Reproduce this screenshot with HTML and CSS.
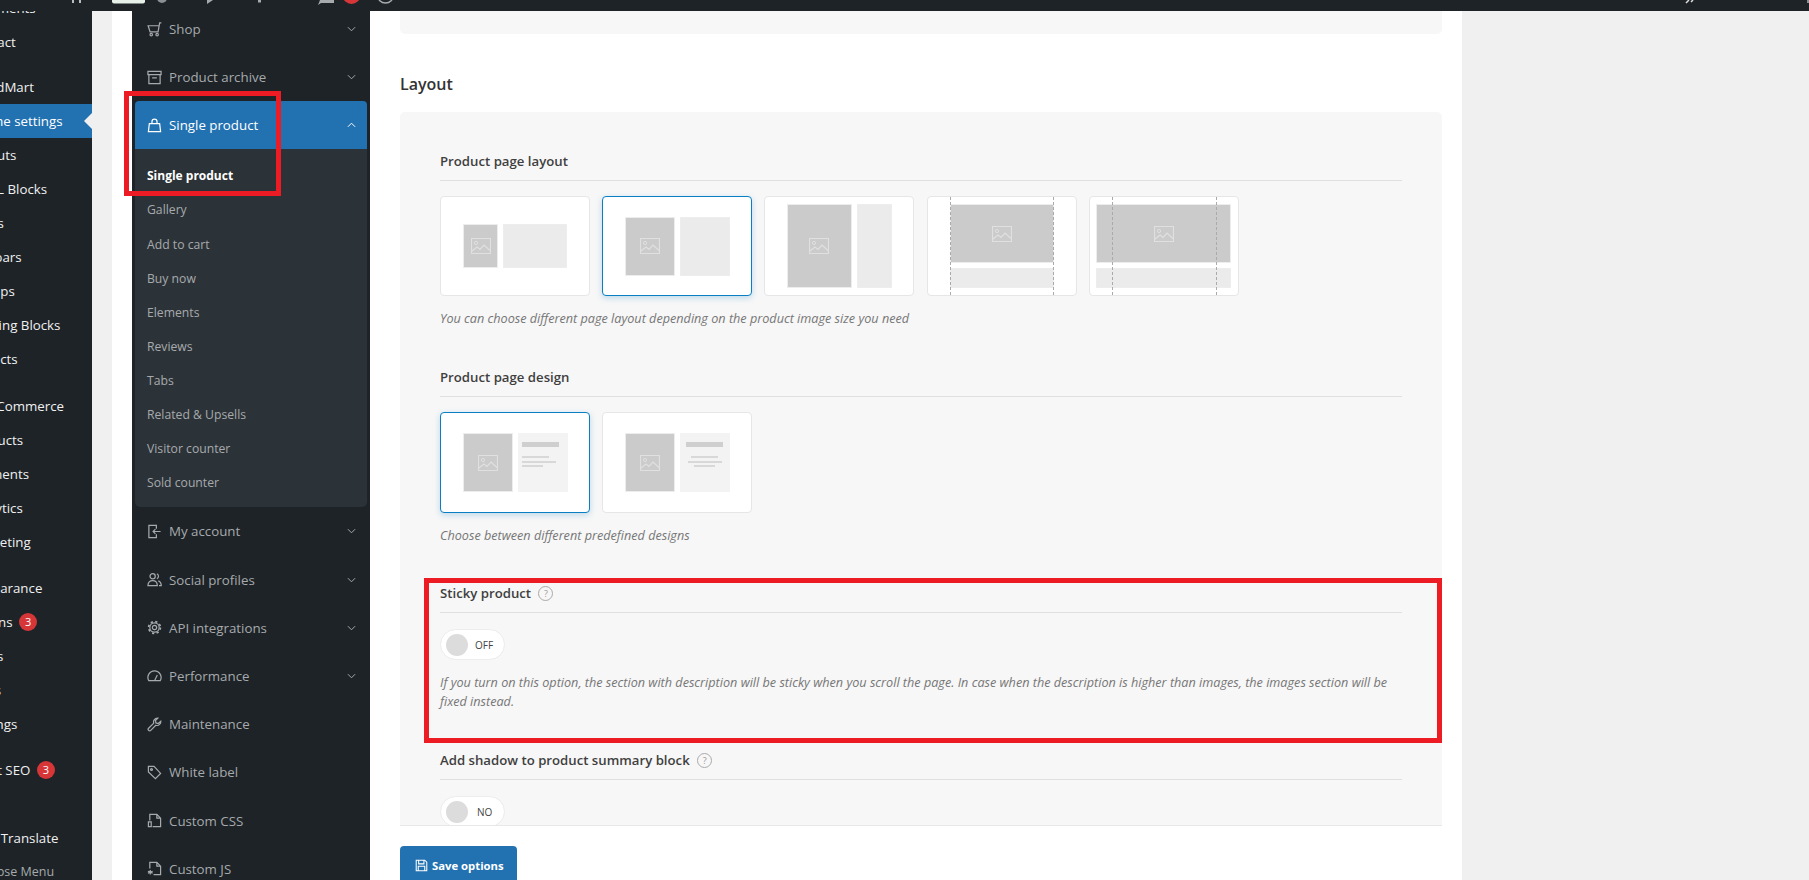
FILE: index.html
```html
<!DOCTYPE html>
<html lang="en">
<head>
    <meta charset="UTF-8">
    <title>Theme settings - Single product</title>
    <link rel="stylesheet" href="styles.css">
</head>
<body>
    <svg class="icon-defs" width="0" height="0">
        <symbol id="pic" viewBox="0 0 20 16">
            <path d="M.5.5h19v15H.5zM1 13l5-4 3 2.500 4-4.500 6 5.500" fill="none" stroke="currentColor" stroke-width="1.200"/>
            <circle cx="5" cy="5" r="1.600" fill="none" stroke="currentColor"/>
        </symbol>
    </svg>

    <!-- only the bottom edge of the admin bar is in view -->
    <div class="admin-bar">
        <svg width="1809" height="11">
            <path d="M73 0v3M80 0v3" stroke="#f0f0f1" stroke-width="1.500"/>
            <rect x="112" y="-6" width="33" height="9.500" rx="2" fill="#e6f0e8"/>
            <circle cx="162" cy="-2" r="5" fill="#8c8f94"/>
            <path d="M207 4l6-4h-6z" fill="#a7aaad"/>
            <rect x="258" y="0" width="3" height="2.500" fill="#a7aaad"/>
            <path d="M318 5l3-2h13V0h-14z" fill="#a7aaad"/>
            <circle cx="351.500" cy="-5" r="9" fill="#d63638"/>
            <circle cx="385.500" cy="-5" r="8" fill="none" stroke="#a7aaad" stroke-width="1.500"/>
            <path d="M1686 3l3-3M1691 2l2-2" stroke="#dcdcde" stroke-width="1.500"/>
            <rect x="1807" y="0" width="2" height="3" fill="#8c8f94"/>
        </svg>
    </div>

    <div class="wrap">
        <div class="wp-menu">
            <ul class="wp-menu-list">
                <li>Comments</li>
                <li>Contact</li>
                <li class="sep sep-s">WoodMart</li>
                <li class="current">Theme settings</li>
                <li>Layouts</li>
                <li>HTML Blocks</li>
                <li>Slides</li>
                <li>Sidebars</li>
                <li>Popups</li>
                <li>Landing Blocks</li>
                <li>Projects</li>
                <li class="sep sep-l">WooCommerce</li>
                <li>Products</li>
                <li>Payments</li>
                <li>Analytics</li>
                <li>Marketing</li>
                <li class="sep">Appearance</li>
                <li>Plugins <span class="count">3</span></li>
                <li>Users</li>
                <li>Tools</li>
                <li>Settings</li>
                <li class="sep">Yoast SEO <span class="count">3</span></li>
                <li>WP</li>
                <li>Loco Translate</li>
                <li class="collapse">Collapse Menu</li>
            </ul>
        </div>

        <div class="panel">
            <nav class="wd-nav">
                <a class="wd-item">
                    <svg class="wd-icon" viewBox="0 0 16 16"><path d="M15.300 1h-1.800l-1.700 9.500H3.300L1.200 4h11.400"/><circle cx="4.500" cy="13.500" r="1.300"/><circle cx="10.800" cy="13.500" r="1.300"/></svg>
                    Shop
                    <svg class="chev" viewBox="0 0 10 6"><path d="M1 1l4 4 4-4"/></svg>
                </a>
                <a class="wd-item">
                    <svg class="wd-icon" viewBox="0 0 16 16"><path d="M1 1.500h14v3.500H1zM2 5v9.500h12V5M5.500 8.500h5"/></svg>
                    Product archive
                    <svg class="chev" viewBox="0 0 10 6"><path d="M1 1l4 4 4-4"/></svg>
                </a>
                <a class="wd-item active">
                    <svg class="wd-icon" viewBox="0 0 16 16"><path d="M2.500 6h11l1 8.500h-13zM5.300 6V4a2.700 2.700 0 015.400 0v2"/></svg>
                    Single product
                    <svg class="chev" viewBox="0 0 10 6"><path d="M1 5l4-4 4 4"/></svg>
                </a>
                <div class="wd-sub">
                    <a class="current">Single product</a>
                    <a>Gallery</a>
                    <a>Add to cart</a>
                    <a>Buy now</a>
                    <a>Elements</a>
                    <a>Reviews</a>
                    <a>Tabs</a>
                    <a>Related &amp; Upsells</a>
                    <a>Visitor counter</a>
                    <a>Sold counter</a>
                </div>
                <a class="wd-item">
                    <svg class="wd-icon" viewBox="0 0 16 16"><path d="M10 5V1.500H2v13h8V11M14.500 8H6.500M9 5.500L6.500 8 9 10.500"/></svg>
                    My account
                    <svg class="chev" viewBox="0 0 10 6"><path d="M1 1l4 4 4-4"/></svg>
                </a>
                <a class="wd-item">
                    <svg class="wd-icon" viewBox="0 0 16 16"><circle cx="6" cy="4.500" r="2.800"/><path d="M1 14.500c0-3.500 2-5.300 5-5.300s5 1.800 5 5.300zM10.500 1.900a2.800 2.800 0 010 5.200M12 9.400c2 .7 3.200 2.500 3.200 5.100h-2.400"/></svg>
                    Social profiles
                    <svg class="chev" viewBox="0 0 10 6"><path d="M1 1l4 4 4-4"/></svg>
                </a>
                <a class="wd-item">
                    <svg class="wd-icon" viewBox="0 0 16 16"><circle cx="8" cy="8" r="2.300"/><circle cx="8" cy="8" r="5"/><circle class="teeth" cx="8" cy="8" r="6.300"/></svg>
                    API integrations
                    <svg class="chev" viewBox="0 0 10 6"><path d="M1 1l4 4 4-4"/></svg>
                </a>
                <a class="wd-item">
                    <svg class="wd-icon" viewBox="0 0 16 16"><path d="M1.900 13.500a7 7 0 1112.200 0zM8 13.500l3-6"/></svg>
                    Performance
                    <svg class="chev" viewBox="0 0 10 6"><path d="M1 1l4 4 4-4"/></svg>
                </a>
                <a class="wd-item">
                    <svg class="wd-icon" viewBox="0 0 16 16"><path d="M14.700 4.500a4 4 0 01-5.300 4.300L4 14.300a1.600 1.600 0 01-2.300-2.300L7.200 6.600A4 4 0 0111.500 1.300L9 3.800l.5 2.500 2.500.6z"/></svg>
                    Maintenance
                </a>
                <a class="wd-item">
                    <svg class="wd-icon" viewBox="0 0 16 16"><path d="M1.500 1.500h6l7 7.500-5.500 5.500-7.500-7z"/><circle cx="4.800" cy="4.800" r="1"/></svg>
                    White label
                </a>
                <a class="wd-item">
                    <svg class="wd-icon" viewBox="0 0 16 16"><path d="M3 8V1.500h7.500l4 4v9H6M10.500 1.500v4h4M1.500 9.500h3v5h-3z"/></svg>
                    Custom CSS
                </a>
                <a class="wd-item">
                    <svg class="wd-icon" viewBox="0 0 16 16"><path d="M3 8V1.500h7.500l4 4v9H7M10.500 1.500v4h4M3.500 9.500v5M1 11l5 2M6 11l-5 2"/></svg>
                    Custom JS
                </a>
            </nav>

            <main class="content">
                <div class="box-end"></div>
                <h3 class="section-title">Layout</h3>

                <div class="options">
                    <div class="field">
                        <div class="field-title">Product page layout</div>
                        <div class="cards">
                            <div class="card">
                                <div class="thumb-row">
                                    <div class="block dark w35 h44"><svg class="pic"><use href="#pic"/></svg></div>
                                    <div class="block light w64 h44"></div>
                                </div>
                            </div>
                            <div class="card selected">
                                <div class="thumb-row">
                                    <div class="block dark w50 h59"><svg class="pic"><use href="#pic"/></svg></div>
                                    <div class="block light w50 h59"></div>
                                </div>
                            </div>
                            <div class="card">
                                <div class="thumb-row">
                                    <div class="block dark w65 h84"><svg class="pic"><use href="#pic"/></svg></div>
                                    <div class="block light w35 h84"></div>
                                </div>
                            </div>
                            <div class="card">
                                <div class="thumb-col">
                                    <div class="block dark w104 h59"><svg class="pic"><use href="#pic"/></svg></div>
                                    <div class="block light w104 h20"></div>
                                </div>
                                <span class="dash d-22"></span>
                                <span class="dash d-126"></span>
                            </div>
                            <div class="card">
                                <div class="thumb-col">
                                    <div class="block dark w135 h59"><svg class="pic"><use href="#pic"/></svg></div>
                                    <div class="block light w135 h20"></div>
                                </div>
                                <span class="dash d-23"></span>
                                <span class="dash d-127"></span>
                            </div>
                        </div>
                        <p class="hint">You can choose different page layout depending on the product image size you need</p>
                    </div>

                    <div class="field field-design">
                        <div class="field-title">Product page design</div>
                        <div class="cards">
                            <div class="card selected">
                                <div class="thumb-row">
                                    <div class="block dark w50 h59"><svg class="pic"><use href="#pic"/></svg></div>
                                    <div class="block pale w50 h59">
                                        <i class="t-head"></i>
                                        <i class="t-line l27"></i>
                                        <i class="t-line l34"></i>
                                        <i class="t-line l21"></i>
                                    </div>
                                </div>
                            </div>
                            <div class="card">
                                <div class="thumb-row">
                                    <div class="block dark w50 h59"><svg class="pic"><use href="#pic"/></svg></div>
                                    <div class="block pale w50 h59 centered">
                                        <i class="t-head"></i>
                                        <i class="t-line l27"></i>
                                        <i class="t-line l34"></i>
                                        <i class="t-line l21"></i>
                                    </div>
                                </div>
                            </div>
                        </div>
                        <p class="hint">Choose between different predefined designs</p>
                    </div>

                    <div class="field">
                        <div class="field-title">Sticky product <span class="help">?</span></div>
                        <div class="switch"><span class="knob"></span>OFF</div>
                        <p class="hint">If you turn on this option, the section with description will be sticky when you scroll the page. In case when the description is higher than images, the images section will be fixed instead.</p>
                    </div>

                    <div class="field">
                        <div class="field-title">Add shadow to product summary block <span class="help">?</span></div>
                        <div class="switch no"><span class="knob"></span>NO</div>
                    </div>
                </div>

                <button class="save-btn" type="button">
                    <svg viewBox="0 0 16 16"><path d="M1.500 1.500h10.500l2.500 2.500v10.500h-13zM4.500 1.500v4.500h6.500V1.500M4 14.500V9h8v5.500"/></svg>
                    Save options
                </button>
            </main>
        </div>
    </div>

    <!-- hand-drawn annotation boxes on the screenshot -->
    <div class="mark mark-nav"></div>
    <div class="mark mark-field"></div>
</body>
</html>
```

FILE: styles.css
```css
* {
    box-sizing: border-box;
}
html, body {
    height: 880px;
    overflow: hidden;
}
body {
    margin: 0;
    background: #f0f0f0;
    font-family: "Open Sans", "Noto Sans", sans-serif;
    color: #333;
}
.icon-defs {
    position: absolute;
}
.admin-bar {
    height: 11px;
    background: #1d2327;
    overflow: hidden;
}
.admin-bar svg {
    display: block;
}
.wrap {
    display: flex;
    height: 869px;
    overflow: hidden;
}

/* wp menu, scrolled off to the left */
.wp-menu {
    flex: 0 0 92px;
    background: #1d2327;
    overflow: hidden;
}
.wp-menu-list {
    list-style: none;
    margin: -20px 0 0 -68px;
    padding: 0;
    width: 160px;
}
.wp-menu-list li {
    position: relative;
    height: 34px;
    padding-left: 36px;
    line-height: 34px;
    font-size: 13.300px;
    white-space: nowrap;
    color: #f0f0f1;
}
.wp-menu-list li.sep {
    margin-top: 12px;
}
.wp-menu-list li.sep-s {
    margin-top: 11px;
}
.wp-menu-list li.sep-l {
    margin-top: 13px;
}
.wp-menu-list li.current {
    background: #2271b1;
    color: #fff;
}
.wp-menu-list li.current::after {
    content: "";
    position: absolute;
    right: 0;
    top: 9px;
    border: 8px solid transparent;
    border-right-color: #f0f0f0;
}
.wp-menu-list li.collapse {
    font-size: 12.500px;
    color: #a7aaad;
}
.count {
    display: inline-block;
    width: 18px;
    height: 18px;
    margin-left: 3px;
    border-radius: 50%;
    background: #d63638;
    color: #fff;
    font-size: 11px;
    line-height: 18px;
    text-align: center;
    vertical-align: 1px;
}

/* theme settings panel */
.panel {
    display: flex;
    flex: 0 0 1350px;
    margin-left: 20px;
    padding-left: 20px;
    background: #fff;
    overflow: hidden;
}
.wd-nav {
    flex: 0 0 238px;
    padding: 0 3px;
    background: #1d2327;
}
.wd-item {
    display: flex;
    align-items: center;
    gap: 7px;
    height: 48.200px;
    padding: 0 8px 0 12px;
    border-radius: 4px;
    font-size: 13.300px;
    color: #a7aaad;
}
.wd-item:first-child {
    margin-top: -6px;
}
.wd-item.active {
    height: 48px;
    border-radius: 4px 4px 0 0;
    background: #2271b1;
    color: #fff;
}
.wd-icon {
    flex: 0 0 15px;
    width: 15px;
    height: 15px;
    fill: none;
    stroke: currentColor;
    stroke-width: 1.300;
}
.teeth {
    stroke-width: 1.800;
    stroke-dasharray: 2.400 2.550;
}
.chev {
    width: 9px;
    height: 6px;
    margin-left: auto;
    margin-right: 3px;
    fill: none;
    stroke: currentColor;
    stroke-width: 1.100;
}
.wd-sub {
    padding: 9px 0 8px;
    border-radius: 0 0 5px 5px;
    background: #2c3338;
}
.wd-sub a {
    display: block;
    height: 34.100px;
    padding-left: 12px;
    line-height: 35px;
    font-size: 12.200px;
    color: #a7aaad;
}
.wd-sub a.current {
    font-size: 12px;
    font-weight: 700;
    color: #fff;
}

/* main column */
.content {
    flex: 1;
    padding: 0 20px 0 30px;
}
.box-end {
    height: 23px;
    border-radius: 0 0 5px 5px;
    background: #f7f7f7;
}
.section-title {
    margin: 39px 0 17px;
    font-size: 16px;
    line-height: 22px;
    font-weight: 600;
    color: #333;
}
.options {
    height: 714px;
    padding: 39px 40px 0;
    border-bottom: 1px solid #e8e8e8;
    border-radius: 5px 5px 0 0;
    background: #f7f7f7;
    overflow: hidden;
}
.field {
    margin-bottom: 39px;
}
.field-design {
    margin-bottom: 38px;
}
.field-title {
    padding-bottom: 9px;
    border-bottom: 1px solid #e0e0e0;
    margin-bottom: 15px;
    font-size: 13.200px;
    line-height: 20px;
    font-weight: 600;
    color: #3f3f3f;
}
.help {
    display: inline-block;
    width: 15px;
    height: 15px;
    margin-left: 4px;
    border: 1px solid #aaa;
    border-radius: 50%;
    font-size: 9px;
    line-height: 13px;
    font-weight: 400;
    text-align: center;
    vertical-align: 1px;
    color: #999;
}
.hint {
    margin: 13px 0 0;
    font-size: 12.650px;
    line-height: 19px;
    font-style: italic;
    color: #767676;
}

/* layout picker */
.cards {
    display: flex;
    gap: 12.200px;
}
.card {
    position: relative;
    display: flex;
    align-items: center;
    justify-content: center;
    width: 150px;
    height: 100px;
    border: 1px solid #e6e6e6;
    border-radius: 4px;
    background: #fff;
}
.field-design .card {
    height: 101px;
}
.card.selected {
    border-color: #0a7ec2;
    box-shadow: 0 2px 6px rgba(10, 126, 194, 0.25);
}
.thumb-row {
    display: flex;
    gap: 5px;
}
.thumb-col {
    display: flex;
    flex-direction: column;
    gap: 5px;
}
.block {
    display: flex;
    align-items: center;
    justify-content: center;
    border: 1px solid #ededed;
}
.dark {
    background: #cbcbcb;
}
.light {
    background: #ebebeb;
}
.pale {
    display: block;
    padding: 8px 3px 0;
    border-color: #f3f3f3;
    background: #f3f3f3;
}
.pale.centered {
    text-align: center;
}
.w35 { width: 35px; }
.w50 { width: 50px; }
.w64 { width: 64px; }
.w65 { width: 65px; }
.w104 { width: 104px; }
.w135 { width: 135px; }
.h20 { height: 20px; }
.h44 { height: 44px; }
.h59 { height: 59px; }
.h84 { height: 84px; }
.pic {
    width: 20px;
    height: 16px;
    color: #e0e0e0;
}
.t-head {
    display: block;
    width: 37px;
    height: 5px;
    margin-bottom: 9px;
    background: #cfcfcf;
}
.t-line {
    display: block;
    height: 2px;
    margin-bottom: 2.500px;
    background: #d8d8d8;
}
.centered .t-head,
.centered .t-line {
    margin-left: auto;
    margin-right: auto;
}
.l21 { width: 21px; }
.l27 { width: 27px; }
.l34 { width: 34px; }
.dash {
    position: absolute;
    top: 0;
    bottom: 0;
    border-left: 1px dashed #aaa;
}
.d-22 { left: 22px; }
.d-126 { left: 125px; }
.d-23 { left: 22px; }
.d-127 { left: 126px; }

/* on/off switch */
.switch {
    display: flex;
    align-items: center;
    gap: 7px;
    width: 65px;
    height: 31px;
    margin-top: 16px;
    padding-left: 5px;
    border: 1px solid #ececec;
    border-radius: 16px;
    background: #fff;
    font-size: 10px;
    font-weight: 500;
    color: #444;
}
.switch.no {
    gap: 9px;
}
.knob {
    width: 22px;
    height: 22px;
    border-radius: 50%;
    background: #dcdcdc;
}

.save-btn {
    display: flex;
    align-items: center;
    gap: 4px;
    width: 117px;
    height: 40px;
    margin-top: 20px;
    padding: 0 0 2px 15px;
    border: 0;
    border-radius: 4px;
    background: #2271b1;
    font-family: inherit;
    font-size: 11.300px;
    font-weight: 700;
    color: #fff;
}
.save-btn svg {
    width: 13px;
    height: 13px;
    fill: none;
    stroke: #fff;
    stroke-width: 1.300;
}

.mark {
    position: absolute;
    border: 5px solid #ed1c24;
}
.mark-nav {
    left: 124px;
    top: 91px;
    width: 157px;
    height: 105px;
}
.mark-field {
    left: 424px;
    top: 578px;
    width: 1018px;
    height: 165px;
}
```
